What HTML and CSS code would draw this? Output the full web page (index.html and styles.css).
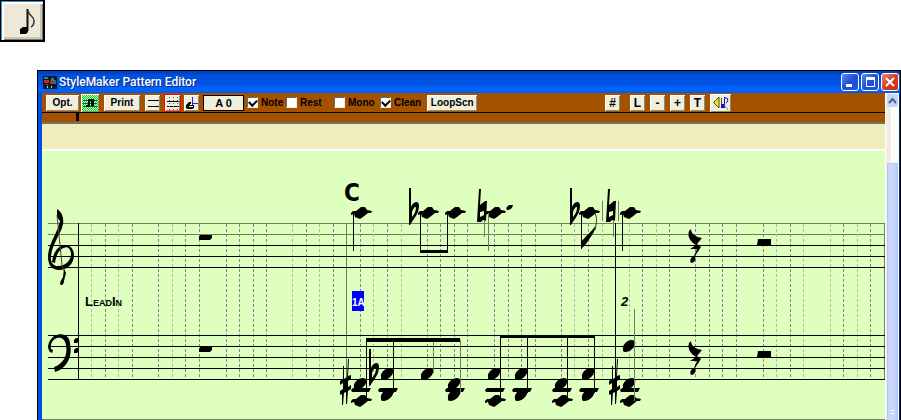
FILE: index.html
```
<!DOCTYPE html>
<html lang="en">
<head>
    <meta charset="UTF-8">
    <meta name="viewport" content="width=device-width, initial-scale=1.0">
    <title>StyleMaker Pattern Editor</title>
    <link rel="stylesheet" href="styles.css">
</head>
<body>
    <button class="note-button" aria-label="Notation">
        <svg width="20" height="28" viewBox="0 0 20 28">
            <path d="M8.500 2V24" stroke="#111" stroke-width="2"/>
            <path d="M9 4c1 5 6 5 6 10 0 3-1 5-3 6" fill="none" stroke="#333" stroke-width="1.500"/>
            <path d="M1 22l3-2h5v5l-2 2H1z" fill="#000"/>
        </svg>
    </button>

    <main class="window">
        <header class="title-bar">
            <svg class="app-icon" width="14" height="13" viewBox="0 0 14 13">
                <path d="M0 0h14v13H0z" fill="#111a1c"/>
                <path d="M1 1h4v2H1zM8 2h3v3H8z" fill="#2a8790"/>
                <path d="M1 4h5v3H1zM7 5h3v3H7z" fill="#c5281c"/>
                <path d="M10 4h3v4h-3zM3 8h2v1H3z" fill="#20708a"/>
                <path d="M4 10h1v2H4zM8 10h1v2H8z" fill="#ccc"/>
            </svg>
            <h1>StyleMaker Pattern Editor</h1>
            <div class="window-buttons">
                <button aria-label="Minimize"><svg width="16" height="16"><path d="M4 10h6v3H4z" fill="#fff"/></svg></button>
                <button aria-label="Maximize"><svg width="16" height="16"><path d="M4 3h9v10H4zM5 6v6h7V6z" fill="#fff" fill-rule="evenodd"/></svg></button>
                <button class="close" aria-label="Close"><svg width="16" height="16"><path d="M4 4l8 8M12 4l-8 8" stroke="#fff" stroke-width="2"/></svg></button>
            </div>
        </header>

        <div class="content">
            <div class="editor">
                <!-- Toolbar -->
                <div class="toolbar">
                    <button class="tool opt">Opt.</button>
                    <button class="tool flat green" aria-label="Chord notation">
                        <svg width="16" height="16">
                            <defs>
                                <pattern id="dither" width="2" height="2" patternUnits="userSpaceOnUse">
                                    <path d="M0 0h2v2H0z" fill="#c8ffc8"/>
                                    <path d="M0 0h1v1H0zM1 1h1v1H1z" fill="#00e020"/>
                                </pattern>
                            </defs>
                            <path d="M0 0h16v16H0z" fill="url(#dither)"/>
                            <path d="M1 5.500h14M1 8.500h14M1 11.500h14" stroke="#064"/>
                            <path d="M6 4h6v7H9V6H8v6H4v-2h2z"/>
                        </svg>
                    </button>
                    <button class="tool print">Print</button>
                    <button class="tool icon" aria-label="Staff view">
                        <svg width="12" height="14"><path d="M1 4.500h11M1 10.500h11" stroke="#000"/></svg>
                    </button>
                    <button class="tool icon selected" aria-label="Grid view">
                        <svg width="13" height="14">
                            <path d="M1 5.500h12M1 10.500h12" stroke="#000"/>
                            <path d="M3.500 1v13M7.500 1v13M11.500 1v13" stroke="#555" stroke-dasharray="1 2"/>
                        </svg>
                    </button>
                    <button class="tool icon" aria-label="Event edit">
                        <svg width="13" height="14">
                            <path d="M1 9l3-3h2v2h3v4l-2 1H3l-2-1z"/>
                            <path d="M5 8.500h4M4 10.500h4" stroke="#fff"/>
                            <path d="M7.500 1v8M7 7.500h6" stroke="#22f"/>
                        </svg>
                    </button>
                    <output class="pitch">A 0</output>
                    <div class="checks">
                        <label class="note"><input type="checkbox" checked>Note</label>
                        <label class="rest"><input type="checkbox">Rest</label>
                        <label class="mono"><input type="checkbox">Mono</label>
                        <label><input type="checkbox" checked>Clean</label>
                    </div>
                    <button class="tool loop">LoopScn</button>

                    <div class="right-tools">
                        <button class="tool square sharp">#</button>
                        <button class="tool square">L</button>
                        <button class="tool square">-</button>
                        <button class="tool square">+</button>
                        <button class="tool square">T</button>
                        <button class="tool flat" aria-label="Play selection">
                            <svg width="18" height="16">
                                <path d="M2 7l5-5v11L2 8z" fill="#ee0" stroke="#542" />
                                <path d="M9.500 3v9" stroke="#553"/>
                                <path d="M12.500 2v9M12 3h3l1 3-2 2" fill="none" stroke="#11c"/>
                                <path d="M9 9h4v4H9z" fill="#11c"/>
                                <path d="M12 10l4 5" stroke="#888"/>
                            </svg>
                        </button>
                    </div>
                </div>

                <div class="position-bar"><div class="position"></div></div>
                <div class="chord-line"></div>

                <!-- Score -->
                <svg class="score" viewBox="42 151 843 268" role="img" aria-label="Pattern score">
                    <defs>
                        <path id="head" d="M-6 3C-7-1-2-6 3-6c4 0 4 4 2 7-2 3-6 5-9 5-2 0-2-1-2-3z"/>
                        <path id="ledger-head" d="M-10 0l2-2h3l5-4h4l2 3 5 1-1 2h-3L2 4l-3 2-5-2-1-3-3 1z"/>
                        <path id="ledger" d="M-10 0l2-2H10L8 2H-9z"/>
                        <path id="flat" fill-rule="evenodd" d="M0-25h2V-6c1-3 3-5 6-5 3 1 2 6 1 10C7 4 3 8 1 12H0zM3-1v5c3-3 4-7 4-10-2 0-3 2-4 5z"/>
                        <path id="natural" fill-rule="evenodd" d="M2-24h2L3-8l5-4h2L9 8 6 7 4 9H0zM3-1v5l4-2v-4z"/>
                        <path id="sharp" d="M3-16h1v13l3-2 1-18h1l-1 17 3-1v4l-3 2v6l3-2v4l-3 2-1 13H6V10l-2 1-1 12H2V12l-2 1V9l3-2V1L0 3v-4l3-2z"/>
                        <path id="quarter-rest" d="M2 0c0 5 5 8 11 9L8 15l4 3-6 9c1 3 0 6-3 7-2 0-2-3-1-5l3-2 3-7H1l6-4C2 13-2 8 0 2z"/>
                    </defs>

                    <g class="staff soft">
                        <path d="M48 223.500H885M48 234.500H885"/>
                        <path d="M346.500 223V380M884.500 223V380"/>
                    </g>
                    <g class="grid">
                        <path d="M105.500 224V379M132.500 224V379M158.500 224V379M185.500 224V379M199.500 224V379M226.500 224V379M239.500 224V379M253.500 224V379M266.500 224V379M306.500 224V379M333.500 224V379"/>
                        <path d="M360.500 224V379M387.500 224V379M427.500 224V379M440.500 224V379M454.500 224V379M467.500 224V379M494.500 224V379M508.500 224V379M521.500 224V379M535.500 224V379M561.500 224V379M588.500 224V379"/>
                        <path d="M642.500 224V379M669.500 224V379M695.500 224V379M709.500 224V379M722.500 224V379M736.500 224V379M763.500 224V379M790.500 224V379M843.500 224V379M870.500 224V379"/>
                    </g>
                    <g class="grid light">
                        <path d="M91.500 224V379M118.500 224V379M172.500 224V379M292.500 224V379M319.500 224V379M373.500 224V379M401.500 224V379M574.500 224V379M602.500 224V379M629.500 224V379M656.500 224V379M776.500 224V379M803.500 224V379M830.500 224V379M857.500 224V379"/>
                    </g>
                    <g class="staff">
                        <path d="M48 245.500H885M48 256.500H885M48 267.500H885"/>
                        <path d="M48 335.500H885M48 346.500H885M48 357.500H885M48 368.500H885M48 379.500H885"/>
                        <path d="M78.500 223V380M615.500 223V380"/>
                    </g>

                    <!-- Clefs -->
                    <path d="M57 209c5 3 7 9 6 15-1 8-11 20-12 32-1 5 2 10 7 10 8 0 13-6 13-12 0-5-4-8-7-6-5 1-8 8-9 15l-3-1c1-9 6-17 13-17 5 0 9 4 9 10 0 9-7 15-15 15-7 0-11-5-11-13 0-13 10-25 12-36l-3-4z"/>
                    <path d="M57 215l5 50 3 8" fill="none" stroke="#444"/>
                    <path d="M64 269l2 4-2 8c0 4-3 5-4 3 0-3 2-5 3-7z"/>
                    <path d="M50 352c-4-5-1-12 4-16 8-4 16-1 16 8 3 13-4 25-15 28l-1-5c9-3 14-11 12-22-1-6-5-8-9-7-5 2-7 6-6 11l2 1-1 3z"/>
                    <path d="M74 340l2-2h3v3l-2 2h-3zM74 350l2-2h3v3l-2 2h-3z"/>

                    <!-- Rests -->
                    <path d="M200 235h12v3l-2 2h-11v-3zM200 347h12v3l-2 2h-11v-3zM758 239h13v6h-14zM758 351h13v6h-14z"/>
                    <use href="#quarter-rest" x="689" y="229"/>
                    <use href="#quarter-rest" x="689" y="341"/>

                    <!-- Treble notes -->
                    <use href="#ledger-head" x="361" y="213"/>
                    <use href="#ledger-head" x="428" y="213"/>
                    <use href="#ledger-head" x="455" y="213"/>
                    <use href="#ledger-head" x="495" y="213"/>
                    <use href="#ledger-head" x="589" y="213"/>
                    <use href="#ledger-head" x="630" y="213"/>
                    <use href="#flat" x="409" y="213"/>
                    <use href="#flat" x="570" y="213"/>
                    <use href="#natural" x="477" y="213"/>
                    <use href="#natural" x="606" y="213"/>
                    <path d="M506 208l3-3h4l-1 3-3 2h-2z"/>
                    <path class="stem" d="M353.500 213V251M420.500 213V252M447.500 213V252M581.500 213V249M622.500 213V251"/>
                    <path class="stem soft" d="M484.500 220V237M488.500 213V251M602.500 201V221M613.500 220V237M618.500 201V221"/>
                    <path d="M420 250h28v3h-28zM581 242c5-6 12-12 15-17l-2 7-8 12-5 5z"/>
                    <path d="M595 213c2 5 2 9 0 17" fill="none" stroke="#333"/>

                    <!-- Bass notes -->
                    <use href="#sharp" x="340" y="382"/>
                    <use href="#head" x="360" y="384"/>
                    <use href="#ledger" x="361" y="390"/>
                    <use href="#ledger-head" x="361" y="401"/>
                    <use href="#flat" x="369" y="374"/>
                    <use href="#head" x="387" y="374"/>
                    <use href="#ledger" x="388" y="390"/>
                    <use href="#head" x="387" y="395"/>
                    <use href="#head" x="427" y="374"/>
                    <use href="#head" x="454" y="384"/>
                    <use href="#ledger" x="455" y="390"/>
                    <use href="#head" x="454" y="395"/>
                    <use href="#head" x="494" y="374"/>
                    <use href="#ledger" x="495" y="390"/>
                    <use href="#ledger-head" x="495" y="401"/>
                    <use href="#head" x="521" y="374"/>
                    <use href="#ledger" x="522" y="390"/>
                    <use href="#head" x="521" y="395"/>
                    <use href="#head" x="561" y="384"/>
                    <use href="#ledger" x="562" y="390"/>
                    <use href="#ledger-head" x="562" y="401"/>
                    <use href="#head" x="588" y="374"/>
                    <use href="#ledger" x="589" y="390"/>
                    <use href="#head" x="588" y="395"/>
                    <use href="#sharp" x="609" y="382"/>
                    <use href="#head" x="629" y="346"/>
                    <use href="#head" x="629" y="384"/>
                    <use href="#ledger" x="630" y="390"/>
                    <use href="#ledger-head" x="630" y="401"/>
                    <path class="stem" d="M366.500 340V400M393.500 340V393M500.500 336V401M527.500 336V393M567.500 336V401M594.500 336V393"/>
                    <path class="stem soft" d="M433.500 340V373M460.500 340V393M634.500 309V401"/>
                    <path d="M366 338h94v4h-94zM500 335h95v3h-95z"/>

                    <!-- Chord and bar labels -->
                    <text class="chord" x="344" y="201">C</text>
                    <text class="bar-label" x="85" y="306">LeadIn</text>
                    <path d="M352 291h12v20h-12z" fill="#0000ff"/>
                    <text class="current" x="352" y="306">1A</text>
                    <text class="bar-label second" x="621" y="306">2</text>
                </svg>
            </div>

            <div class="scrollbar">
                <button class="scroll-up" aria-label="Scroll up">
                    <svg width="9" height="8"><path d="M1 6l3.500-4L8 6" fill="none" stroke="#4d6185" stroke-width="2"/></svg>
                </button>
                <div class="thumb"><div class="grip"></div></div>
            </div>
        </div>
    </main>
</body>
</html>
```
FILE: styles.css
```
* {
    box-sizing: border-box;
    margin: 0;
    padding: 0;
}

body {
    background-color: #fff;
    color: #000;
    font-family: 'Liberation Sans', Arial, sans-serif;
    font-size: 10px;
}

svg {
    display: block;
}

button {
    font: inherit;
    color: inherit;
    border: none;
    display: flex;
    align-items: center;
    justify-content: center;
}

.note-button {
    width: 45px;
    height: 42px;
    padding-left: 14px;
    background-color: #ece9d8;
    border: 1px solid #000;
    border-right-width: 2px;
    border-bottom-width: 2px;
    box-shadow: inset 1px 1px #3c94bd, inset 3px 3px #fff, inset -1px -1px #77756b, inset -3px -3px #c9c6b6;
}

/* Window frame */
.window {
    margin: 28px 0 0 37px;
    border-top: 1px solid #000;
    border-left: 1px solid #000;
    border-right: 1px solid #000;
}

.title-bar {
    display: flex;
    align-items: center;
    height: 22px;
    padding: 0 1px 0 5px;
    background: linear-gradient(#0038b8, #0050dc 20%, #0052e4 60%, #0062fa 75%, #0062fa 95%, #0050d8);
}

h1 {
    flex: 1;
    margin-left: 2px;
    font-family: Roboto, sans-serif;
    font-size: 12px;
    line-height: 16px;
    font-weight: 500;
    color: #fff;
    text-shadow: 1px 1px #0a2a80;
}

.window-buttons {
    display: flex;
    gap: 2px;
}

.window-buttons button {
    width: 18px;
    height: 18px;
    border: 1px solid #fff;
    border-radius: 3px;
    background: linear-gradient(135deg, #5b8cf0, #1d4fd8 50%, #2058e0);
}

.window-buttons .close {
    background: linear-gradient(135deg, #f08868, #d83c1c 50%, #c83010);
}

.content {
    display: flex;
    border-left: 4px solid #0050e0;
    border-right: 1px solid #00308c;
}

.editor {
    flex: 1;
    min-width: 0;
}

/* Toolbar */
.toolbar {
    display: flex;
    align-items: center;
    height: 20px;
    padding-left: 4px;
    background-color: #a55200;
    border-bottom: 1px solid #000;
    font-weight: bold;
    white-space: nowrap;
}

.tool {
    flex: none;
    height: 16px;
    background-color: #efefde;
    box-shadow: inset 1px 1px #fff, inset -1px -1px #8c8c7b;
}

.opt {
    width: 33px;
    margin-right: 2px;
}

.flat {
    width: 21px;
    height: 18px;
}

.green {
    width: 18px;
}

.print {
    width: 36px;
    margin: 0 5px;
}

.icon {
    width: 15px;
    margin-right: 4px;
}

.selected {
    width: 17px;
    height: 18px;
    margin-right: 3px;
    border: 1px solid #f00;
}

.pitch {
    width: 41px;
    height: 16px;
    border: 1px solid #000;
    background-color: #efefde;
    font-size: 11px;
    line-height: 15px;
    text-align: center;
}

.checks {
    display: flex;
    margin: 0 6px 0 3px;
}

.checks label {
    display: flex;
    align-items: center;
}

.checks .note {
    width: 39px;
}

.checks .rest {
    width: 48px;
}

.checks .mono {
    width: 46px;
}

.checks input {
    appearance: none;
    flex: none;
    width: 11px;
    height: 11px;
    margin-right: 3px;
    background-color: #fff;
    border: 1px solid #efefde;
    border-top-color: #6b6b63;
    border-left-color: #6b6b63;
}

.checks input:checked::before {
    content: "";
    display: block;
    width: 6px;
    height: 4px;
    margin: 1px;
    border-left: 2px solid #000;
    border-bottom: 2px solid #000;
    transform: rotate(-45deg);
}

.loop {
    width: 50px;
}

.right-tools {
    display: flex;
    align-items: center;
    gap: 5px;
    margin-left: auto;
    padding-right: 154px;
}

.square {
    width: 15px;
    font-size: 12px;
}

.sharp {
    margin-right: 5px;
}

.position-bar {
    height: 11px;
    padding-left: 34px;
    background-color: #a55200;
    border-bottom: 2px solid #737363;
}

.position {
    width: 3px;
    height: 8px;
    background-color: #000;
}

.chord-line {
    height: 27px;
    background-color: #efedbd;
    border-bottom: 2px solid #fff;
}

/* Score */
.score {
    width: 100%;
    height: auto;
    background-color: #deffbd;
    border-bottom: 1px solid #73846b;
}

.staff,
.stem {
    fill: none;
    stroke: #000;
}

.soft {
    stroke: #6f7f5e;
}

.grid {
    fill: none;
    stroke: #84848c;
    stroke-dasharray: 3 2;
}

.light {
    stroke: #adc09d;
}

.chord {
    font: bold 24px 'DejaVu Sans Condensed', 'DejaVu Sans', sans-serif;
}

.bar-label {
    font-size: 13px;
    font-weight: bold;
    font-variant: small-caps;
}

.current {
    font-size: 10px;
    font-weight: bold;
    fill: #fff;
}

.second {
    font-style: italic;
}

/* Scrollbar */
.scrollbar {
    display: flex;
    flex-direction: column;
    width: 14px;
    padding: 1px 1px 0 2px;
    background: linear-gradient(90deg, #fff 1px, #f4ede4 1px, #f4ede4 6px, #fefdfb 6px);
}

.scroll-up {
    height: 13px;
    margin-bottom: 56px;
    border-radius: 2px;
    background-color: #c3d5fd;
}

.thumb {
    flex: 1;
    display: flex;
    align-items: flex-end;
    justify-content: center;
    padding-bottom: 6px;
    border: 1px solid #b5c8f7;
    border-bottom: none;
    background: linear-gradient(90deg, #c8d6fb, #c8d6fb 70%, #b0c8f8);
}

.grip {
    width: 5px;
    height: 4px;
    border-top: 1px solid #eef4fe;
    border-bottom: 1px solid #eef4fe;
}
```
